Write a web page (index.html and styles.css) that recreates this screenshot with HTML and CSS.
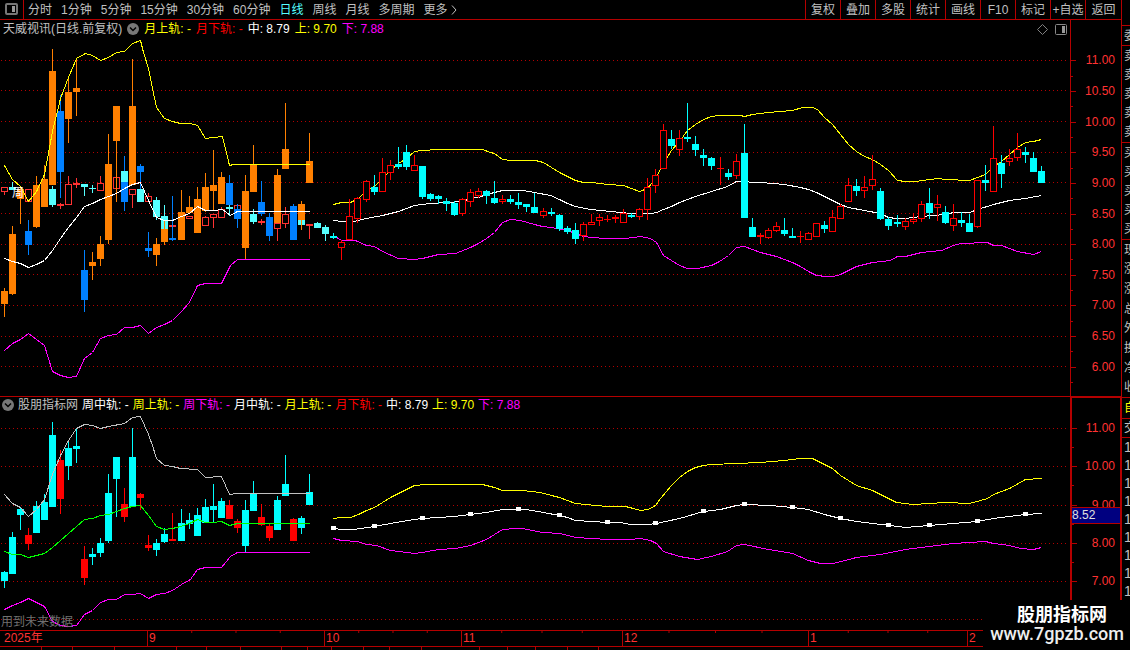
FILE: index.html
```html
<!DOCTYPE html>
<html lang="zh-CN">
<head>
<meta charset="utf-8">
<title>天威视讯 日线</title>
<link rel="stylesheet" href="styles.css">
</head>
<body>
<div class="app">
  <main class="main">
    <header class="toolbar">
      <button class="tool-icon" aria-label="侧栏">
        <svg width="13" height="12" viewBox="0 0 13 12"><rect x="1" y="1" width="11" height="10" rx="1" fill="none" stroke="#777" stroke-width="2"/><rect x="7" y="3" width="3" height="6" fill="#999"/></svg>
      </button>
      <nav class="periods">
        <button>分时</button><button>1分钟</button><button>5分钟</button><button>15分钟</button><button>30分钟</button><button>60分钟</button><button class="active">日线</button><button>周线</button><button>月线</button><button>多周期</button><button class="more">更多<svg width="6" height="10" viewBox="0 0 6 10"><path d="M1 0.5L5 5L1 9.5" fill="none" stroke="#c0c0c0"/></svg></button>
      </nav>
      <nav class="actions">
        <button>复权</button><button>叠加</button><button>多股</button><button>统计</button><button>画线</button><button>F10</button><button>标记</button><button>+自选</button><button>返回</button>
      </nav>
    </header>

    <section class="panel panel-price">
      <div class="plot">
        <svg id="price" class="chart" viewBox="0 20 1070 376" preserveAspectRatio="none"></svg>
        <div class="legend">
          <span class="gray">天威视讯(日线.前复权)</span>
          <button class="fold" aria-label="展开"><svg width="12" height="12" viewBox="0 0 12 12"><circle cx="6" cy="6" r="6" fill="#777"/><path d="M3 4.5L6 7.5L9 4.5" fill="none" stroke="#000" stroke-width="1.5"/></svg></button>
          <span class="yellow">月上轨: -</span><span class="red">月下轨: -</span><span class="white">中: 8.79</span><span class="yellow">上: 9.70</span><span class="magenta">下: 7.88</span>
        </div>
        <div class="plot-tools">
          <button aria-label="标注"><svg width="11" height="11" viewBox="0 0 11 11"><path d="M5.5 0.5L10.500 5.500L5.500 10.500L0.500 5.500Z" fill="none" stroke="#808080"/></svg></button>
          <button aria-label="面板"><svg width="12" height="11" viewBox="0 0 12 11"><rect x="0.500" y="0.500" width="11" height="10" rx="1" fill="none" stroke="#888"/><rect x="7" y="2" width="3" height="7" fill="#999"/></svg></button>
        </div>
      </div>
      <div class="axis axis-price">
        <span>11.00</span><span>10.50</span><span>10.00</span><span>9.50</span><span>9.00</span><span>8.50</span><span>8.00</span><span>7.50</span><span>7.00</span><span>6.50</span><span>6.00</span>
      </div>
    </section>

    <section class="panel panel-study">
      <div class="plot">
        <svg id="study" class="chart" viewBox="0 397 1070 233" preserveAspectRatio="none"></svg>
        <div class="legend legend-study">
          <button class="fold" aria-label="展开"><svg width="12" height="12" viewBox="0 0 12 12"><circle cx="6" cy="6" r="6" fill="#777"/><path d="M3 4.5L6 7.5L9 4.5" fill="none" stroke="#000" stroke-width="1.5"/></svg></button>
          <span class="gray">股朋指标网</span><span class="white">周中轨: -</span><span class="yellow">周上轨: -</span><span class="magenta">周下轨: -</span><span class="white">月中轨: -</span><span class="yellow">月上轨: -</span><span class="red">月下轨: -</span><span class="white">中: 8.79</span><span class="yellow">上: 9.70</span><span class="magenta">下: 7.88</span>
        </div>
        <div class="notice">用到未来数据</div>
      </div>
      <div class="axis axis-study">
        <span>11.00</span><span>10.00</span><span>9.00</span><span>8.00</span><span>7.00</span>
        <div class="cursor-price">8.52</div>
      </div>
    </section>

    <div class="timeline">
      <span>2025年</span><span>9</span><span>10</span><span>11</span><span>12</span><span>1</span><span>2</span>
    </div>
    <footer class="tabs"><i></i><i></i><i></i><i></i><i></i><i></i><i></i><i></i><i></i><i></i><i></i><i></i><i></i><i></i><i></i><i></i><i></i><i></i></footer>
  </main>

  <aside class="quote">
    <div></div>
    <div><span>委</span></div>
    <div><span>卖</span><span>卖</span><span>卖</span><span>卖</span><span>卖</span></div>
    <div><span>买</span><span>买</span><span>买</span><span>买</span><span>买</span></div>
    <div><span>现</span><span>涨</span><span>涨</span><span>总</span><span>外</span><span>换</span><span>净</span><span>收</span></div>
    <div><span class="yellow">自</span></div>
    <div><span>交</span></div>
    <div class="ticks"><span>1</span><span>1</span><span>1</span><span>1</span><span>1</span><span>1</span><span>1</span><span>1</span><span>1</span></div>
  </aside>

  <div class="watermark"><strong>股朋指标网</strong><span>www.7gpzb.com</span></div>
</div>
<script src="app.js"></script>
</body>
</html>
```

FILE: styles.css
```css
* { box-sizing: border-box; }
body {
  margin: 0;
  background: #000;
  color: #c0c0c0;
  font: 12px/16px "Liberation Sans", "Noto Sans CJK SC", sans-serif;
}
button {
  margin: 0;
  padding: 0;
  border: 0;
  background: none;
  color: inherit;
  font: inherit;
  white-space: nowrap;
}
svg { display: block; }
.app {
  position: relative;
  display: grid;
  grid-template-columns: minmax(0, 1fr) 9px;
  height: 100vh;
  overflow: hidden;
}
.main {
  display: grid;
  grid-template-rows: 20px minmax(0, 377fr) minmax(0, 233fr) 16px 4px;
  min-width: 0;
}
.yellow { color: #ff0; }
.red { color: #f00; }
.white { color: #fff; }
.magenta { color: #f0f; }
.gray { color: #c0c0c0; }

.toolbar {
  display: flex;
  border-bottom: 1px solid #b40000;
}
.tool-icon {
  display: flex;
  align-items: center;
  width: 24px;
  padding: 0 0 2px 5px;
  border-right: 1px solid #b40000;
}
.periods {
  display: flex;
  flex: 1;
  gap: 9px;
  padding-left: 4px;
}
.active { color: #5ff; }
.more {
  display: flex;
  align-items: center;
  gap: 3px;
}
.actions { display: flex; }
.actions button {
  width: 35px;
  border-left: 1px solid #b40000;
}
.actions button:last-child { width: 36px; }

.panel {
  display: grid;
  grid-template-columns: minmax(0, 1fr) 51px;
  min-height: 0;
}
.panel-price { border-bottom: 1px solid #b40000; }
.plot {
  position: relative;
  min-height: 0;
}
.chart {
  width: 100%;
  height: 100%;
  shape-rendering: crispEdges;
}
.chart text {
  fill: #fff;
  font-size: 12px;
}
.legend {
  position: absolute;
  top: 1px;
  left: 3px;
  display: flex;
  align-items: center;
  gap: 5px;
  white-space: nowrap;
}
.legend-study {
  top: 0;
  left: 2px;
  gap: 4px;
}
.plot-tools {
  position: absolute;
  top: 4px;
  right: 3px;
  display: flex;
  gap: 7px;
}
.notice {
  position: absolute;
  left: 1px;
  bottom: 0;
  color: #707070;
}
.axis {
  position: relative;
  display: flex;
  flex-direction: column;
  border-left: 1px solid #b40000;
  color: #ff3232;
}
.axis-price { padding: 25px 6px 14px 0; }
.axis-study {
  margin-top: -1px;
  padding: 11px 5px 30px 0;
  border-top: 2px solid #b40000;
  border-right: 1px solid #b40000;
  border-left-width: 2px;
}
.axis span {
  position: relative;
  display: flex;
  flex: 1;
  align-items: center;
  justify-content: flex-end;
}
.axis span::before,
.axis span::after {
  content: "";
  position: absolute;
  left: 0;
  top: 50%;
  width: 5px;
  height: 1px;
  background: #b40000;
}
.axis span::after {
  top: 100%;
  width: 2px;
}
.cursor-price {
  position: absolute;
  top: 47%;
  left: 0;
  right: 0;
  border: solid #b40000;
  border-width: 1px 0;
  background: #000080;
  color: #e0e0e0;
  line-height: 15px;
}
.timeline {
  display: grid;
  grid-template-columns: 147fr 177fr 137fr 161fr 186fr 159fr 154fr;
  border-top: 1px solid #b40000;
  color: #ff3232;
  line-height: 15px;
}
.timeline span {
  padding-left: 1px;
  border-left: 1px solid #b40000;
  background: linear-gradient(to right, #b40000 1px, transparent 1px) 0 0 / 25% 2px repeat-x border-box;
}
.timeline span:first-child {
  padding-left: 4px;
  border: 0;
  background: none;
}
.tabs {
  display: grid;
  grid-template-columns: 42fr 31fr 42fr 62fr 30fr 34fr 41fr 26fr 24fr 32fr 26fr 32fr 58fr 28fr 28fr 32fr 31fr 522fr;
  border-top: 1px solid #b40000;
}
.tabs i { border-right: 1px solid #b40000; }

.quote {
  display: grid;
  grid-template-rows: 25fr 20fr 97fr 97fr 158fr 21fr 19fr 213fr;
  border-left: 1px solid #b40000;
  overflow: hidden;
}
.quote div {
  display: flex;
  flex-direction: column;
  padding-left: 2px;
  border-top: 1px solid #b40000;
  min-height: 0;
}
.quote div:first-child { border: 0; }
.quote span {
  display: flex;
  flex: 1;
  align-items: center;
  min-height: 0;
}
.quote .ticks { font-size: 14px; }
.ticks span { flex: 0 0 18px; }
.watermark {
  position: absolute;
  right: 0;
  bottom: 0;
  display: flex;
  flex-direction: column;
  align-items: center;
  padding: 5px 6px 7px 7px;
  background: #000;
  color: #fff;
  white-space: nowrap;
}
.watermark strong {
  padding-left: 10px;
  font-size: 18px;
  line-height: 20px;
}
.watermark span {
  font: 500 18px/18px Roboto, sans-serif;
  color: #eee;
}
```

FILE: app.js
```js
const NS = "http://www.w3.org/2000/svg";
const ORANGE = "#ff8000", BLUE = "#0080ff", AQUA = "#55ffff", CYAN = "#00ffff", RED = "#ff0000", ROSE = "#ff3232";

function add(svg, name, attrs) {
  const el = document.createElementNS(NS, name);
  for (const k in attrs) el.setAttribute(k, attrs[k]);
  svg.appendChild(el);
  return el;
}

function grid(svg, ys) {
  for (const y of ys) {
    for (let x = 1; x < 1067; x += 4) {
      add(svg, "rect", { x, y, width: 1, height: 1, fill: "#b40000" });
    }
  }
}

/* Each entry: x high top bottom low */
function candles(svg, color, hollow, data) {
  for (const row of data.trim().split(";")) {
    const [x, high, top, bottom, low] = row.trim().split(" ").map(Number);
    const h = Math.max(1, bottom - top);
    if (hollow && h > 2) {
      if (top > high) add(svg, "rect", { x, y: high, width: 1, height: top - high, fill: color });
      if (low > bottom) add(svg, "rect", { x, y: bottom, width: 1, height: low - bottom, fill: color });
      add(svg, "rect", { x: x - 2.5, y: top + 0.5, width: 6, height: h - 1, fill: "#000", stroke: color });
    } else {
      add(svg, "rect", { x, y: high, width: 1, height: low - high, fill: color });
      add(svg, "rect", { x: x - 3, y: top, width: 7, height: h, fill: color });
    }
  }
}

function line(svg, color, pts) {
  const moved = pts.split(" ").map(p => p.split(",").map(v => +v + 0.5).join(",")).join(" ");
  add(svg, "polyline", { points: moved, fill: "none", stroke: color });
}

const price = document.getElementById("price");
grid(price, [60, 90, 121, 152, 182, 213, 244, 274, 305, 336, 366]);

const upperMonth = "333,204 341,202 350,202 358,198 366,190 374,186 382,178 390,170 398,163 406,158 414,151 422,150 438,149 482,149 490,152 494,153 502,159 510,160 535,160 543,162 551,167 559,172 567,176 575,180 583,182 591,182 607,184 623,185 631,188 639,191 647,188 655,178 663,163 671,150 679,141 687,130 695,124 703,119 711,116 719,115 740,115 744,116 752,114 768,112 792,110 802,107 812,107 817,109 824,117 832,124 840,134 848,144 856,151 864,156 872,159 880,164 888,170 897,180 905,181 915,181 937,178 945,179 969,180 985,174 993,166 1001,161 1009,154 1017,147 1025,142 1033,141 1041,139";
const midMonth = "333,220 341,221 353,221 366,218 382,215 398,211 414,205 430,203 446,202 462,201 470,198 478,197 486,194 494,192 502,190 522,190 534,192 550,195 559,199 567,203 575,206 590,209 600,210 620,212 630,213 651,213 656,212 663,209 671,206 679,202 695,196 711,191 727,186 736,181 760,182 784,184 800,187 808,189 816,192 824,196 832,200 840,204 848,207 864,210 880,213 888,217 896,218 905,218 921,216 945,214 953,212 969,212 977,209 993,204 1009,200 1025,198 1041,195";
const lowerMonth = "333,235 341,240 355,240 366,245 374,246 382,251 398,258 414,259 422,258 438,254 455,253 470,247 478,243 486,238 494,232 502,222 510,219 520,220 534,224 542,226 551,227 567,230 583,236 591,237 605,238 625,238 640,236 650,238 656,242 663,255 671,260 679,265 687,268 697,268 711,265 719,261 728,255 736,247 744,246 760,252 776,256 792,262 800,266 808,271 816,275 826,276 833,276 840,274 856,266 872,262 890,260 897,256 905,256 921,252 941,250 953,245 960,243 987,242 993,245 1001,245 1009,248 1017,251 1033,254 1041,251";
line(price, "#ff0", upperMonth);
line(price, "#fff", midMonth);
line(price, "#f0f", lowerMonth);

/* Daily bars inside the weekly section */
candles(price, ROSE, true, "4 187 187 192 195;28 189 189 202 202;60 203 204 206 209;68 176 184 205 205;76 178 183 185 188;100 176 183 191 191;116 177 177 189 189;132 189 189 195 208;148 193 196 202 202;172 225 225 227 227;189 216 216 219 219;205 216 217 226 226;213 214 214 218 228;221 207 209 218 218;237 205 205 213 213;261 219 221 223 225;277 223 223 229 241;285 207 214 224 228;309 224 224 226 239");
candles(price, AQUA, false, "12 182 187 190 190;52 186 189 205 207;84 184 184 187 196;92 185 188 189 193;140 189 189 202 202;156 197 200 217 220;164 205 216 229 229;229 205 207 209 216;253 209 214 222 224;301 220 220 225 225;317 222 223 228 228;325 225 227 234 241");
/* Weekly bars */
candles(price, ORANGE, false, "4 288 291 304 317;12 226 234 294 295;20 187 189 199 224;36 176 185 227 228;44 165 179 207 207;52 49 71 185 185;68 77 92 119 143;76 59 88 92 116;92 252 262 266 280;100 236 244 259 266;108 134 164 240 244;116 106 106 141 202;132 59 106 185 185;156 238 244 255 266;164 220 229 242 245;181 190 212 240 240;189 196 207 213 213;197 187 199 233 233;205 173 187 211 212;213 150 185 191 210;221 172 177 204 204;245 175 191 248 259;253 145 165 192 192;277 169 175 223 223;285 103 149 169 169;301 201 204 220 230;309 133 161 183 183");
candles(price, AQUA, false, "124 171 171 182 182");
candles(price, BLUE, false, "28 220 231 245 255;60 95 111 172 198;84 250 270 300 312;124 182 182 202 211;140 164 166 172 189;148 232 248 251 257;172 196 238 240 241;229 175 183 205 205;237 204 209 219 228;261 181 202 214 216;269 213 217 236 241;293 204 206 240 240");
add(price, "rect", { x: 124, y: 156, width: 1, height: 15, fill: BLUE });

/* Daily bars */
[
  "341 240 242 248 260;349 199 216 240 240;357 197 198 219 223;366 180 181 200 202;382 158 172 192 192;390 160 165 173 180;414 155 165 171 171;462 198 199 214 216;470 189 192 202 207;478 188 191 196 198;502 195 199 202 204;543 208 211 216 218;583 222 224 236 241;591 214 222 225 225;599 214 217 221 226;607 215 219 220 222;615 215 217 219 223;623 209 213 223 223;639 208 209 217 220;647 178 187 210 220;655 169 175 186 193;663 124 130 169 169;679 130 138 150 156;720 157 168 169 185;736 154 161 176 179",
  "760 233 235 237 244;768 228 230 238 239;776 222 226 231 232;800 231 236 237 243;808 232 233 240 240;816 223 223 237 237;832 210 217 232 232;840 204 206 219 219;848 178 185 202 202;864 176 187 191 198;872 155 179 186 190;905 218 221 227 230;913 213 219 222 224;921 201 204 219 222;937 195 204 208 221;953 204 218 226 231;977 180 180 227 228;993 126 158 192 192;1009 149 158 162 166;1017 133 149 158 161"
].forEach(d => candles(price, RED, true, d));
[
  "333 233 236 238 239;374 175 187 192 195;398 147 164 167 169;406 145 152 167 170;422 166 166 197 199;430 193 194 199 201;438 195 196 199 204;446 198 201 204 211;454 201 203 215 216;486 190 191 196 204;494 181 198 203 204;510 195 199 202 204;518 193 202 205 209;526 204 204 207 212;534 193 207 213 213;551 208 212 214 216;559 214 215 229 231;567 226 228 232 234;575 223 230 239 244;631 213 215 217 218;671 130 139 146 149;687 103 137 139 142;695 136 144 150 156;703 149 155 158 166;711 157 158 166 170;728 169 173 177 180;744 124 153 218 218",
  "752 218 227 237 237;784 218 230 234 236;792 228 236 238 238;824 221 225 229 233;856 179 186 191 196;880 188 191 219 220;888 217 219 226 230;897 215 222 224 227;929 188 203 213 219;945 206 212 223 224;961 212 220 223 227;969 214 223 232 232;985 165 180 183 191;1001 155 163 174 188;1025 147 152 155 163;1033 152 158 172 172;1041 166 171 183 183"
].forEach(d => candles(price, CYAN, false, d));

line(price, "#ff0", "4,165 12,179 20,186 28,201 36,191 44,174 52,131 60,98 68,77 76,58 85,53 92,55 100,60 108,57 116,52 124,51 132,43 140,40 143,52 148,68 152,88 156,107 164,118 172,121 180,123 190,123 197,125 205,138 213,137 222,136 229,165 233,164 309,164");
line(price, "#fff", "4,258 12,261 20,263 28,267 36,264 44,260 52,250 60,238 68,227 76,217 84,206 92,203 100,199 108,196 116,193 124,188 132,184 140,182 148,200 156,217 164,220 172,220 181,216 189,213 197,206 205,210 213,210 222,209 230,215 237,211 309,211");
line(price, "#f0f", "4,350 12,343 20,339 28,333 36,339 44,345 52,371 60,375 68,377 76,376 84,358 92,352 100,338 108,335 116,334 124,327 132,327 140,325 148,333 156,327 164,324 172,320 180,312 189,302 197,285 205,283 221,283 230,265 237,259 309,259");
add(price, "text", { x: 12, y: 197 }).textContent = "周";

const study = document.getElementById("study");
grid(study, [428, 466, 505, 543, 581, 619]);
candles(study, CYAN, false, "4 571 572 581 588;12 532 537 574 574;20 507 509 515 530;36 501 506 533 533;44 494 502 520 520;52 422 435 507 507;68 440 448 466 480;76 428 446 449 463;92 548 554 557 565;100 538 543 553 557;108 474 493 541 543;116 457 457 479 517;132 428 457 507 507;156 539 543 550 556;164 528 534 542 543;181 509 523 541 541;189 513 520 524 529;197 508 515 536 536;205 499 507 523 523;213 484 506 510 523;221 498 501 518 518;245 500 510 546 553;253 481 494 511 511;277 496 500 530 530;285 455 484 496 496;301 516 518 528 534;309 474 492 505 505");
candles(study, RED, false, "28 528 535 544 550;60 450 460 499 514;84 546 559 578 585;124 488 504 517 522;140 493 494 498 510;148 535 545 548 551;172 513 539 541 541;229 500 505 519 519;237 519 521 528 533;261 504 517 525 526;269 524 526 538 541;293 518 519 541 541");
line(study, "#c0c0c0", "4,494 12,503 20,507 28,516 36,509 44,499 52,474 60,455 68,440 76,428 84,424 92,425 100,428 108,426 124,423 132,417 140,416 148,434 152,445 156,458 164,465 172,466 180,468 197,469 205,477 221,476 229,494 237,493 309,493");
line(study, "#0f0", "4,551 12,554 20,554 28,557 44,553 52,547 60,540 68,533 76,526 84,519 92,518 100,515 108,514 116,511 124,508 132,506 140,505 148,515 156,526 164,529 172,528 180,526 189,523 197,519 205,522 213,522 221,521 229,525 237,523 309,523");
line(study, "#f0f", "4,609 12,605 20,602 28,598 44,606 52,621 60,625 68,626 76,625 84,614 92,610 100,602 108,599 116,599 124,594 132,594 140,593 148,598 156,594 164,593 172,590 181,584 190,579 197,569 205,567 221,567 230,556 237,552 309,552");
line(study, "#ff0", "333,518 341,517 350,517 358,514 366,510 374,507 382,502 390,497 398,493 406,489 414,485 426,484 482,484 494,487 502,490 522,490 540,492 551,495 559,497 575,503 595,505 607,506 625,506 633,508 640,510 648,509 655,505 660,498 671,485 679,477 687,471 695,467 703,465 711,464 760,462 784,460 800,458 812,458 820,462 832,468 840,475 856,485 872,490 880,494 888,498 896,502 913,504 945,502 969,503 980,500 987,498 993,494 1009,488 1025,479 1041,478");
line(study, "#fff", "333,528 341,529 353,529 374,526 390,523 414,519 422,518 454,516 470,514 486,512 502,509 526,509 543,512 559,515 567,517 575,520 591,521 607,522 620,522 630,524 647,524 656,523 679,518 703,511 720,509 736,505 744,504 770,505 792,507 808,509 824,514 840,518 856,521 872,523 890,525 905,527 929,525 953,523 977,521 993,518 1025,514 1041,513");
line(study, "#f0f", "333,538 341,540 357,541 366,544 376,545 390,550 414,553 422,552 438,549 455,548 470,545 486,539 494,534 502,529 515,528 522,528 542,532 560,533 575,537 607,539 630,539 640,538 650,540 656,543 663,551 679,556 697,559 711,556 727,551 736,545 744,544 768,549 792,553 808,560 820,563 833,563 856,557 880,554 905,549 929,546 953,543 985,541 993,543 1009,545 1020,548 1033,549 1041,547");
for (const [x, y] of [[333, 528], [374, 526], [422, 518], [470, 514], [518, 509], [559, 515], [607, 522], [655, 523], [703, 511], [744, 504], [792, 507], [840, 518], [888, 525], [929, 525], [977, 521], [1025, 514]]) {
  add(study, "rect", { x: x - 2, y: y - 2, width: 5, height: 4, fill: "#fff" });
}
```
